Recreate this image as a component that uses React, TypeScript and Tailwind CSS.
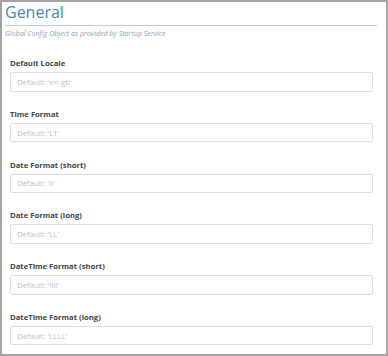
const FIELDS: { label: string; placeholder: string }[] = [
  { label: "Default Locale", placeholder: "Default: 'en-gb'" },
  { label: "Time Format", placeholder: "Default: 'LT'" },
  { label: "Date Format (short)", placeholder: "Default: 'll'" },
  { label: "Date Format (long)", placeholder: "Default: 'LL'" },
  { label: "DateTime Format (short)", placeholder: "Default: 'llll'" },
  { label: "DateTime Format (long)", placeholder: "Default: 'LLLL'" },
];

export default function App() {
  return (
    <div className="w-[388px] h-[356px] overflow-hidden border-2 border-[#a3a3a3] bg-white font-['Open_Sans',sans-serif]">
      <div className="pl-[3px] pr-[9px]">
        <h1 className="text-[16px] leading-[20px] pb-[3px] text-[#3b8db0] border-b border-[#a9d3e0]">
          General
        </h1>
        <p className="mt-[2px] text-[7.1px] leading-[10px] italic text-[#8aa7b3]">
          Global Config Object as provided by Startup Service
        </p>
      </div>
      <div className="mt-[20px] pl-[8px] pr-[13px] flex flex-col gap-[17.3px]">
        {FIELDS.map(({ label, placeholder }) => (
          <div key={label} className="flex flex-col">
            <label className="text-[7.7px] leading-[10px] font-bold text-[#454545] mb-[4px]">
              {label}
            </label>
            <input
              placeholder={placeholder}
              className="w-full h-[19.5px] px-[6px] rounded-[2px] border border-[#dedede] bg-white text-[7.8px] text-[#555] placeholder:text-[#c0c0c0] focus:outline-none"
            />
          </div>
        ))}
      </div>
    </div>
  );
}
